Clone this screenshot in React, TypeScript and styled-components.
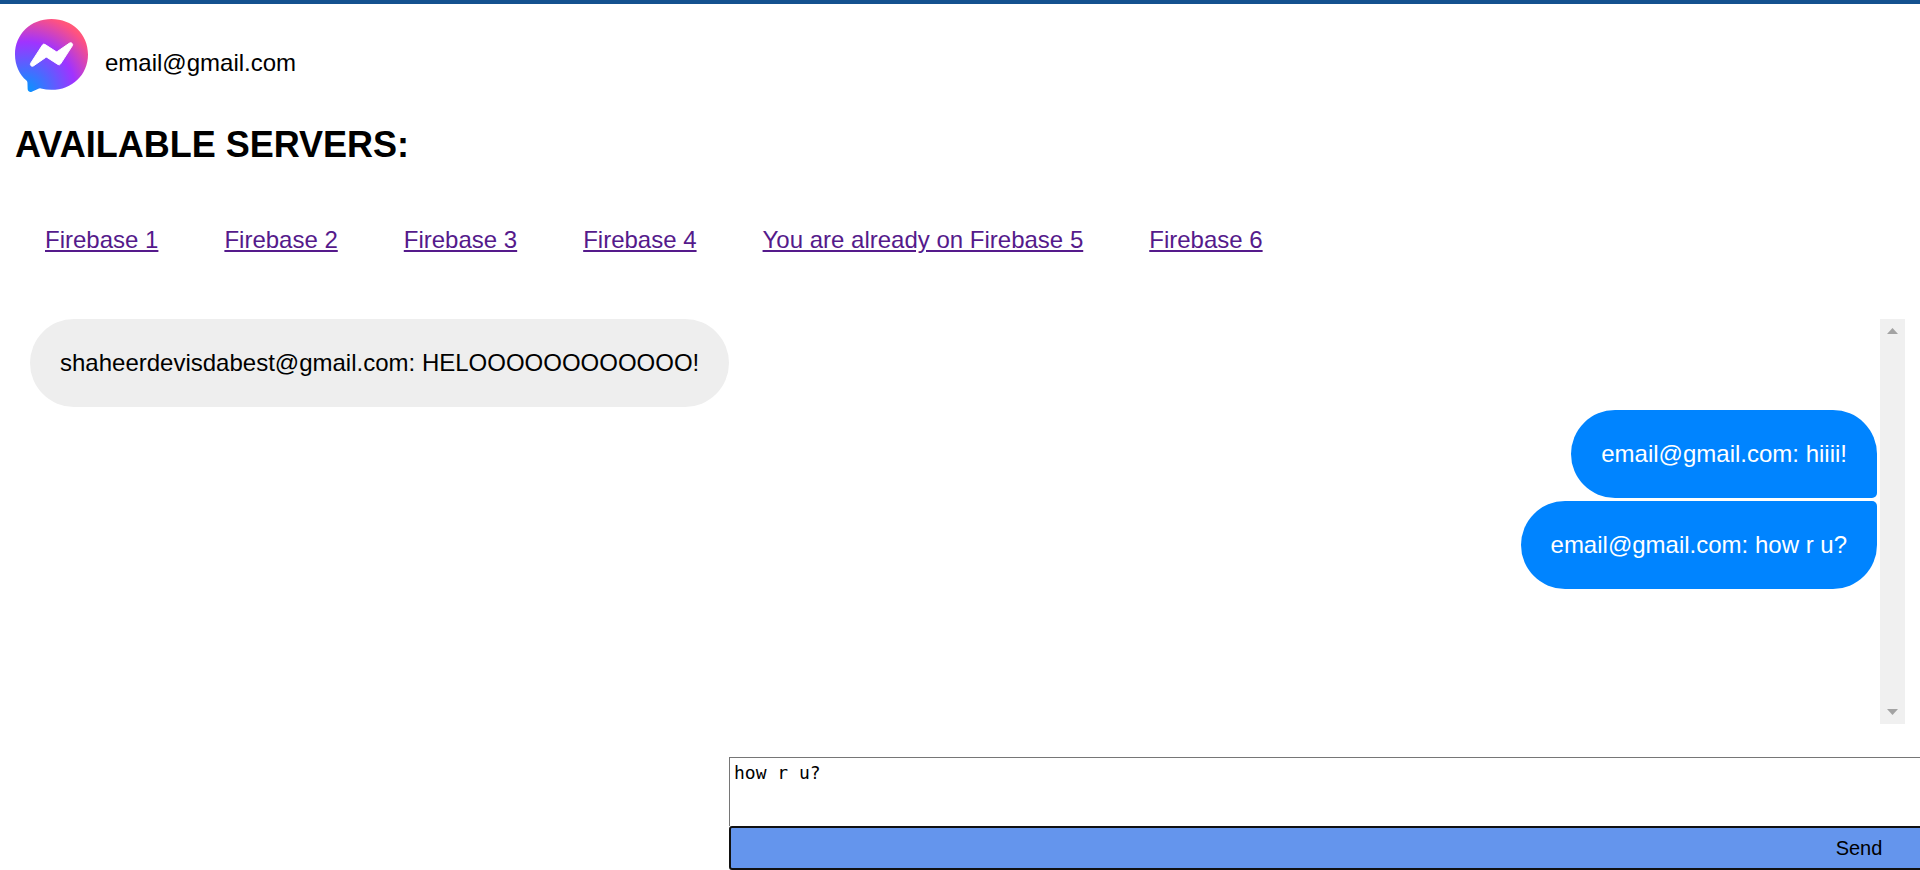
import React from "react";
import styled, { createGlobalStyle } from "styled-components";

const Global = createGlobalStyle`
  html, body { margin: 0; padding: 0; background: #fff; overflow: hidden; height: 870px; }
  body { font-family: "Liberation Sans", Arial, sans-serif; color: #000; }
`;
const Page = styled.div`
  width: 1920px;
  height: 870px;
  box-sizing: border-box;
  border-top: 4px solid #14518f;
  overflow: hidden;
`;
const Header = styled.header`
  display: flex;
  align-items: flex-end;
  gap: 17px;
  padding: 15px 15px 0;
  height: 73px;
`;
const UserEmail = styled.span`
  font-size: 24px;
  line-height: 28px;
  margin-bottom: 15px;
`;
const Title = styled.h1`
  margin: 32px 15px 0;
  font-size: 36px;
  line-height: 41px;
  font-weight: 700;
`;
const ServerList = styled.nav`
  display: flex;
  gap: 66px;
  padding: 0 45px;
  margin-top: 61px;
`;
const ServerLink = styled.a`
  font-size: 24px;
  line-height: 28px;
  color: #551a8b;
  text-decoration: underline;
`;
const ChatArea = styled.section`
  display: flex;
  margin: 65px 15px 0 30px;
  height: 405px;
`;
const Messages = styled.div`
  flex: 1;
  display: flex;
  flex-direction: column;
  gap: 3px;
  padding-right: 3px;
`;
const Bubble = styled.div<{ $own?: boolean; $tail?: "top" | "bottom" }>`
  align-self: ${(p) => (p.$own ? "flex-end" : "flex-start")};
  padding: 30px;
  font-size: 24px;
  line-height: 28px;
  border-radius: 44px;
  background: ${(p) => (p.$own ? "#0084ff" : "#eeeeee")};
  color: ${(p) => (p.$own ? "#fff" : "#000")};
  ${(p) => p.$tail === "bottom" && "border-bottom-right-radius: 5px;"}
  ${(p) => p.$tail === "top" && "border-top-right-radius: 5px;"}
`;
const Track = styled.div`
  width: 25px;
  flex: none;
  background: #f0f0f0;
  display: flex;
  flex-direction: column;
  justify-content: space-between;
  align-items: center;
  padding: 9px 0;
  box-sizing: border-box;
`;
const Arrow = styled.svg`
  display: block;
  width: 11px;
  height: 6px;
  fill: #a3a3a3;
`;
const Composer = styled.form`
  margin: 33px 0 0 729px;
  width: 2260px;
  display: flex;
  flex-direction: column;
`;
const Input = styled.textarea`
  display: block;
  box-sizing: border-box;
  width: 100%;
  height: 69px;
  margin: 0;
  padding: 4px 4px 0;
  border: 1px solid #767676;
  border-right: 0;
  border-bottom: 0;
  outline: none;
  resize: none;
  overflow: hidden;
  font-family: "DejaVu Sans Mono", monospace;
  font-size: 18px;
  line-height: 21px;
  color: #000;
  background: #fff;
`;
const SendButton = styled.button`
  display: block;
  box-sizing: border-box;
  width: 100%;
  height: 44px;
  margin: 0;
  border: 2px solid #111;
  border-radius: 3px;
  background: #6495ed;
  font-family: "Liberation Sans", Arial, sans-serif;
  font-size: 20px;
  color: #000;
  padding: 0;
`;

const Logo = () => (
  <svg width="73" height="73" viewBox="0 0 24 24" style={{ display: "block" }}>
    <defs>
      <radialGradient id="mg" gradientUnits="userSpaceOnUse" cx="3.5" cy="24" r="30">
        <stop offset="0" stopColor="#0099ff" />
        <stop offset="0.55" stopColor="#a033ff" />
        <stop offset="0.85" stopColor="#ff5280" />
        <stop offset="1" stopColor="#ff7061" />
      </radialGradient>
    </defs>
    <path
      fill="url(#mg)"
      d="M12 0C5.24 0 0 4.952 0 11.64c0 3.499 1.434 6.521 3.769 8.61a.96.96 0 0 1 .323.683l.065 2.135a.96.96 0 0 0 1.347.85l2.381-1.053a.96.96 0 0 1 .641-.046A13 13 0 0 0 12 23.28c6.76 0 12-4.952 12-11.64S18.76 0 12 0z"
    />
    <path
      fill="#fff"
      stroke="#fff"
      strokeWidth="0.35"
      strokeLinejoin="round"
      transform="translate(12 12) scale(0.92) translate(-12 -12)"
      d="M18.806 7.44c.522-.03.971.567.63 1.094l-4.178 6.457a.707.707 0 0 1-.977.208l-3.87-2.504a.44.44 0 0 0-.49.007l-4.363 3.01c-.637.438-1.415-.317-.995-.966l4.179-6.457a.706.706 0 0 1 .977-.21l3.87 2.505c.15.097.344.094.491-.007l4.362-3.008a.7.7 0 0 1 .364-.13"
    />
  </svg>
);

const servers = ["Firebase 1", "Firebase 2", "Firebase 3", "Firebase 4", "You are already on Firebase 5", "Firebase 6"];

export default function App() {
  return (
    <Page>
      <Global />
      <Header>
        <Logo />
        <UserEmail>email@gmail.com</UserEmail>
      </Header>
      <Title>AVAILABLE SERVERS:</Title>
      <ServerList>
        {servers.map((s) => (
          <ServerLink key={s} href="#">{s}</ServerLink>
        ))}
      </ServerList>
      <ChatArea>
        <Messages>
          <Bubble>shaheerdevisdabest@gmail.com: HELOOOOOOOOOOOO!</Bubble>
          <Bubble $own $tail="bottom">email@gmail.com: hiiii!</Bubble>
          <Bubble $own $tail="top">email@gmail.com: how r u?</Bubble>
        </Messages>
        <Track>
          <Arrow viewBox="0 0 11 6"><path d="M5.5 0 11 6H0z" /></Arrow>
          <Arrow viewBox="0 0 11 6"><path d="M0 0h11L5.500 6z" /></Arrow>
        </Track>
      </ChatArea>
      <Composer>
        <Input defaultValue="how r u?" />
        <SendButton type="button">Send</SendButton>
      </Composer>
    </Page>
  );
}
